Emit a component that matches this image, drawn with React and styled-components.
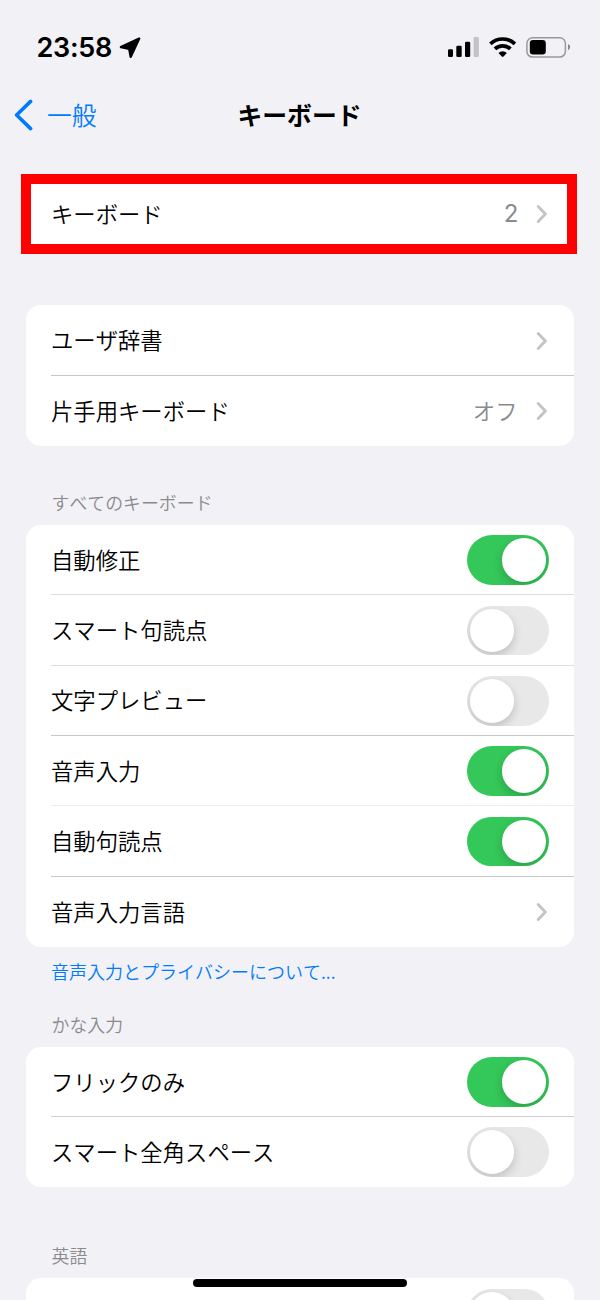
import React from 'react';
import styled, {createGlobalStyle} from 'styled-components'

const GlobalStyle = createGlobalStyle`
    *{
        box-sizing: border-box;
    }
    body{
        margin: 0;
        background: #f2f1f6;
        font-family: "Noto Sans CJK JP", sans-serif;
        font-weight: 350;
        font-kerning: none;
        color: #000;
    }
`

const Chevron = ()=>{
    return(
        <ChevronSvg viewBox="0 0 12 20">
            <path d="M2.2 2.6 L9.4 10 L2.2 17.4" />
        </ChevronSvg>
    )
}

const Switch = ({on})=>{
    return(
        <Track $on={on} role="switch" aria-checked={!!on}>
            <Knob />
        </Track>
    )
}

const Row = ({label, value, latin, link, toggle, on, line})=>{
    return(
        <RowDiv $line={line}>
            <Label>{label}</Label>
            {value ? <Value $latin={latin}>{value}</Value> : null}
            {link ? <Chevron /> : null}
            {toggle ? <Switch on={on} /> : null}
        </RowDiv>
    )
}

const StatusIcons = ()=>{
    return(
        <StatusSvg viewBox="0 0 124 24">
            <rect x="1" y="13.3" width="5" height="7.7" rx="1.3" />
            <rect x="9.3" y="9.8" width="5.4" height="11.2" rx="1.3" />
            <rect x="18" y="5.7" width="5.2" height="15.3" rx="1.3" />
            <rect x="26.6" y="1" width="5.3" height="20" rx="1.3" fill="#c3c2c6" />
            <g fill="none" stroke="#000" strokeWidth="3.7">
                <path d="M43.4 7.9 A17.8 17.8 0 0 1 67.9 7.9" />
                <path d="M47.9 12.9 A11.2 11.2 0 0 1 63.4 12.9" />
            </g>
            <path d="M51.5 17 A5.8 5.8 0 0 1 59.8 17 L56.5 20.5 Q55.65 21.3 54.8 20.5 Z" />
            <rect x="79.9" y="1.8" width="38.5" height="19.2" rx="5.6" fill="none" stroke="#99989c" strokeWidth="1.5" />
            <rect x="82.8" y="4" width="16" height="14.5" rx="3.2" />
            <path d="M121 8 Q123.2 9 123.2 11.1 Q123.2 13.2 121 14.2 Z" fill="#88878b" />
        </StatusSvg>
    )
}

const App = ()=>{
    return(
        <Screen>
            <GlobalStyle />
            <StatusBar>
                <Clock>23:58</Clock>
                <LocationSvg viewBox="0 0 22 22">
                    <path d="M20.2 1.6 L1.9 10.1 L10.2 11.9 L11.7 19.8 Z" strokeWidth="2.4" stroke="#000" strokeLinejoin="round" />
                </LocationSvg>
                <StatusIcons />
            </StatusBar>
            <NavBar>
                <Back>
                    <BackSvg viewBox="0 0 20 32">
                        <path d="M17.6 2.4 L3.6 16 L17.6 29.6" />
                    </BackSvg>
                    <BackLabel>一般</BackLabel>
                </Back>
                <Title>キーボード</Title>
            </NavBar>
            <Highlight>
                <Row label="キーボード" value="2" latin link />
            </Highlight>
            <Card>
                <Row label="ユーザ辞書" link line="#c6c6c8" />
                <Row label="片手用キーボード" value="オフ" link />
            </Card>
            <SectionTitle $top={42.6}>すべてのキーボード</SectionTitle>
            <Card>
                <Row label="自動修正" toggle on line="#dcdcde" />
                <Row label="スマート句読点" toggle line="#dedee0" />
                <Row label="文字プレビュー" toggle line="#c8c8ca" />
                <Row label="音声入力" toggle on line="#ececed" />
                <Row label="自動句読点" toggle on line="#c8c8ca" />
                <Row label="音声入力言語" link />
            </Card>
            <FootLink>音声入力とプライバシーについて...</FootLink>
            <SectionTitle $top={27}>かな入力</SectionTitle>
            <Card>
                <Row label="フリックのみ" toggle on line="#d0d0d2" />
                <Row label="スマート全角スペース" toggle />
            </Card>
            <SectionTitle $top={55}>英語</SectionTitle>
            <Card>
                <Row toggle />
            </Card>
            <HomeIndicator />
        </Screen>
    )
}

export default App

const Screen = styled.div`
    position: relative;
    width: 600px;
    height: 1300px;
    overflow: hidden;
    background: #f2f1f6;
`
const StatusBar = styled.div`
    display: flex;
    align-items: center;
    height: 95px;
    padding: 0 29px 0 36.5px;
`
const Clock = styled.div`
    width: 81.5px;
    font-family: Inter, sans-serif;
    font-size: 27px;
    font-weight: 600;
    letter-spacing: -0.3px;
    white-space: nowrap;
`
const LocationSvg = styled.svg`
    width: 22px;
    height: 22px;
    margin-left: 1px;
`
const StatusSvg = styled.svg`
    width: 124px;
    height: 24px;
    margin-left: auto;
`
const NavBar = styled.div`
    display: grid;
    grid-template-columns: 1fr auto 1fr;
    align-items: center;
    height: 40px;
    padding: 0 14px 0 13px;
`
const Back = styled.div`
    display: flex;
    align-items: center;
    gap: 14px;
    color: #007aff;
`
const BackLabel = styled.span`
    padding-bottom: 1px;
    font-size: 24.8px;
    line-height: 37px;
`
const BackSvg = styled.svg`
    width: 20px;
    height: 32px;
    fill: none;
    stroke: #007aff;
    stroke-width: 3.6;
    stroke-linecap: round;
    stroke-linejoin: round;
`
const Title = styled.h1`
    margin: 0;
    padding-bottom: 1px;
    font-size: 24.8px;
    font-weight: 700;
    line-height: 37px;
`
const Card = styled.div`
    margin: 0 26px;
    background: #fff;
    border-radius: 15px;
`
const RowDiv = styled.div`
    display: flex;
    align-items: center;
    height: 70.4px;
    margin-left: 25px;
    padding-right: 25px;
    box-shadow: ${props => (props.$line ? `inset 0 -1px 0 ${props.$line}` : 'none')};
`
const Highlight = styled.div`
    display: flex;
    align-items: center;
    height: 80px;
    margin: 39px 23px 51.4px 21px;
    background: #fff;
    border: 10px solid #ff0000;

    ${RowDiv}{
        flex: 1;
        height: 60px;
        margin-left: 20px;
        padding-right: 18px;
    }
`
const Label = styled.div`
    flex: 1;
    padding-bottom: 2.6px;
    font-size: 22.35px;
    line-height: 32px;
    white-space: nowrap;
`
const Value = styled.div`
    margin-right: ${props => (props.$latin ? '17.5px' : '18.5px')};
    padding-bottom: ${props => (props.$latin ? '0' : '2.6px')};
    color: #8a8a8e;
    font-family: ${props => (props.$latin ? 'Inter, sans-serif' : 'inherit')};
    font-size: ${props => (props.$latin ? '24px' : '22.35px')};
    font-weight: ${props => (props.$latin ? 400 : 'inherit')};
    line-height: 32px;
`
const ChevronSvg = styled.svg`
    width: 12px;
    height: 20px;
    margin-right: 1px;
    fill: none;
    stroke: #c4c4c6;
    stroke-width: 2.9;
    stroke-linecap: round;
    stroke-linejoin: round;
`
const Track = styled.div`
    display: flex;
    justify-content: ${props => (props.$on ? 'flex-end' : 'flex-start')};
    width: 82px;
    height: 49.6px;
    padding: 3px;
    overflow: hidden;
    border-radius: 25px;
    background: ${props => (props.$on ? '#34c759' : '#e8e8e8')};
`
const Knob = styled.div`
    width: 43.6px;
    height: 43.6px;
    border-radius: 50%;
    background: #fff;
    box-shadow: 0 4px 10px rgba(0, 0, 0, 0.18);
`
const SectionTitle = styled.div`
    margin-top: ${props => props.$top}px;
    padding: 0 51.5px 10px;
    color: #8a8a8e;
    font-size: 17.9px;
    line-height: 26px;
`
const FootLink = styled.div`
    margin-top: 10.6px;
    padding: 0 51px;
    color: #007aff;
    font-size: 18px;
    line-height: 26px;
`
const HomeIndicator = styled.div`
    position: absolute;
    bottom: 13px;
    left: 193px;
    width: 214px;
    height: 8px;
    border-radius: 4px;
    background: #000;
`
